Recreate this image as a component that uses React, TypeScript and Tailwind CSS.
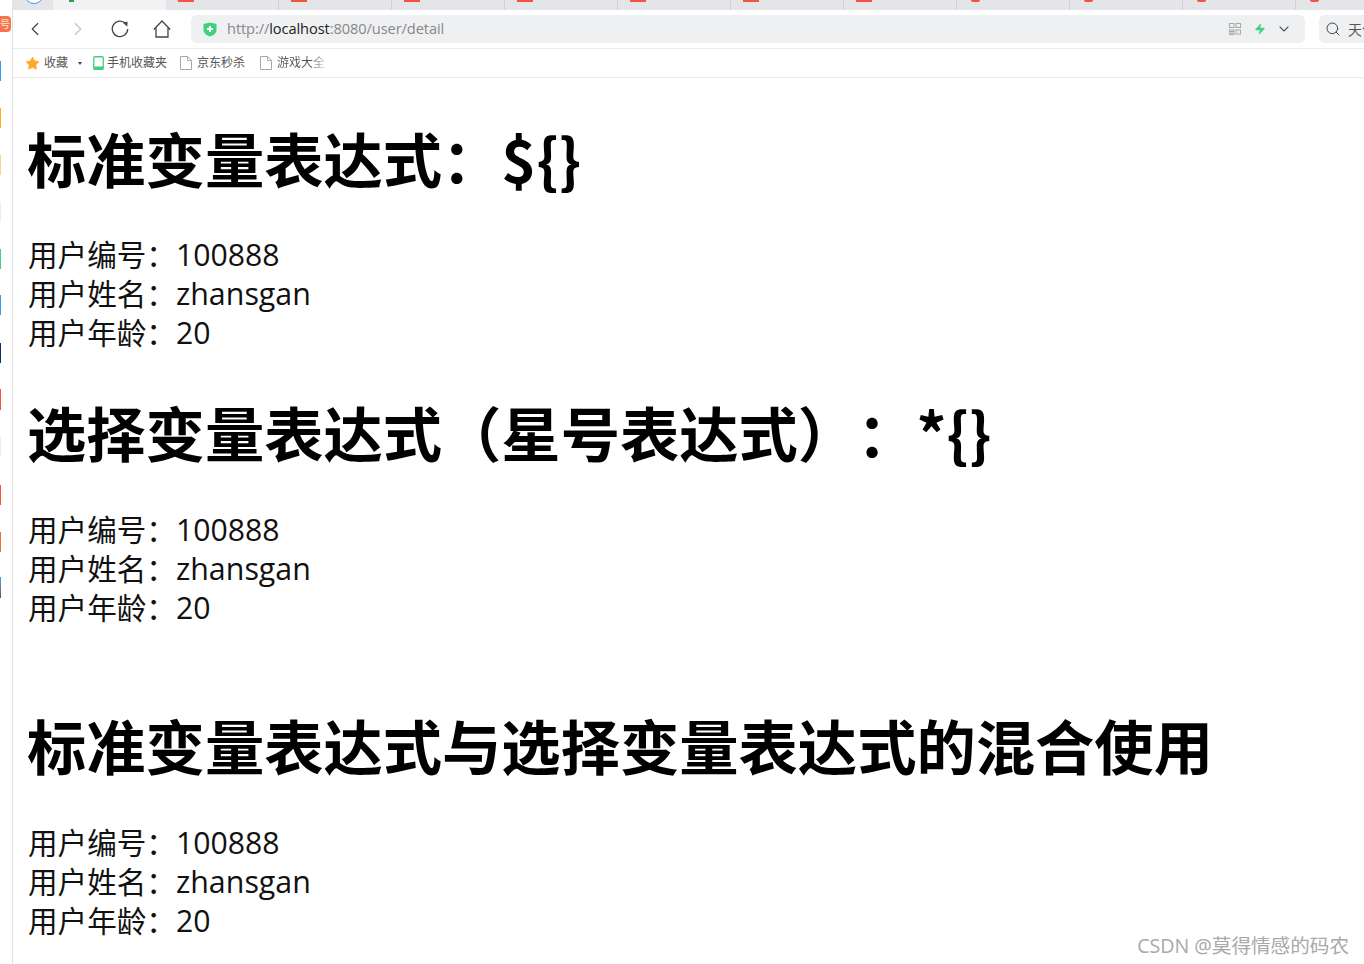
import React from "react";
import { ChevronLeft, ChevronRight, ChevronDown, Search, Zap, Star } from "lucide-react";

function Rows() {
  return (
    <div className="text-[29.6px] leading-[39px] text-[#111]">
      <div>用户编号：<span className="text-[30.2px]">100888</span></div>
      <div>用户姓名：<span className="text-[30.4px]">zhansgan</span></div>
      <div>用户年龄：<span className="text-[30.2px]">20</span></div>
    </div>
  );
}

function Tab({ round }: { round?: boolean }) {
  return (
    <div className={`w-[113px] h-full shrink-0 flex border-r border-[#cfd0d4] ${round ? "pl-[14px]" : "pl-[12px]"}`}>
      {round ? (
        <div className="w-[9px] h-[2px] rounded-b-full bg-[#f5533d]" />
      ) : (
        <div className="w-4 h-[2px] bg-[#f5533d]" />
      )}
    </div>
  );
}

function PageIcon({ className }: { className: string }) {
  return (
    <svg className={className} width="12" height="14" viewBox="0 0 12 14" fill="none" stroke="#a9a9a9" strokeWidth="1">
      <path d="M0.5 0.5 H7.5 L11.5 4.5 V13.5 H0.5 Z" />
      <path d="M7.5 0.5 V4.5 H11.5" />
    </svg>
  );
}

export default function App() {
  return (
    <div className="w-[1364px] h-[964px] overflow-hidden bg-white flex font-['Open_Sans','Noto_Sans_CJK_SC',sans-serif] [text-spacing-trim:space-all]">
      <div className="w-[12px] shrink-0 flex flex-col items-start">
        <div className="mt-[16px] w-[11px] h-[16px] bg-[#f8734f] rounded-r-sm text-[#ffe9c8] text-[10px] leading-[16px] overflow-hidden">号</div>
        <div className="mt-[29px] w-[1px] h-[20px] bg-[#3a9fe8]" />
        <div className="mt-[27px] w-[1px] h-[20px] bg-[#ffb020]" />
        <div className="mt-[27px] w-[1px] h-[20px] bg-[#ffd48a]" />
        <div className="mt-[27px] w-[1px] h-[20px] bg-[#eeeeee]" />
        <div className="mt-[27px] w-[1px] h-[20px] bg-[#3fd17f]" />
        <div className="mt-[26px] w-[1px] h-[20px] bg-[#3a9fe8]" />
        <div className="mt-[28px] w-[1px] h-[20px] bg-[#0b2f6b]" />
        <div className="mt-[26px] w-[1px] h-[21px] bg-[#f5533d]" />
        <div className="mt-[27px] w-[1px] h-[20px] bg-[#eeeeee]" />
        <div className="mt-[28px] w-[1px] h-[20px] bg-[#f5533d]" />
        <div className="mt-[27px] w-[1px] h-[20px] bg-[#e8703a]" />
        <div className="mt-[25px] w-[1px] h-[21px] bg-gradient-to-b from-[#3a9fe8] to-[#8a4a2a]" />
      </div>
      <div className="flex-1 min-w-0 border-l border-[#e3e3e3] flex flex-col relative">
        {/* tabs */}
        <div className="h-[10px] bg-[#e4e5e9] flex shrink-0 overflow-hidden">
          <div className="w-[40px] shrink-0 relative">
            <div className="absolute left-[11px] -top-[17px] w-[20px] h-[21px] rounded-full border border-[#3a9fe8] bg-white" />
          </div>
          <div className="w-[113px] shrink-0 bg-[#f1f2f4] pl-[16px]"><div className="w-[5px] h-[2px] bg-[#2e9e4f]" /></div>
          <Tab /><Tab /><Tab /><Tab /><Tab /><Tab /><Tab />
          <Tab round /><Tab round /><Tab round /><Tab round />
        </div>
        {/* toolbar */}
        <div className="h-[38px] flex items-center shrink-0 text-[#444]">
          <ChevronLeft className="ml-[11px] w-[22px] h-[24px] text-[#444]" strokeWidth={1.3} />
          <ChevronRight className="ml-[21px] w-[22px] h-[24px] text-[#c4c4c4]" strokeWidth={1.3} />
          <svg className="ml-[22px]" width="18" height="18" viewBox="0 0 18 18" fill="none">
            <path d="M14.6 3.6 A7.7 7.7 0 1 0 16.7 9" stroke="#444" strokeWidth="1.3" />
            <path d="M11.8 2.6 L16.6 1.8 L16.2 6.8 Z" fill="#444" />
          </svg>
          <svg className="ml-[24px]" width="18" height="18" viewBox="0 0 18 18" fill="none" stroke="#444" strokeWidth="1.3">
            <path d="M0.8 9.5 L9 1 L17.2 9.5" />
            <path d="M3 8 V17 H15 V8" />
          </svg>
          <div className="ml-[20px] w-[1114px] h-[28px] shrink-0 rounded-md bg-[#eff0f2] flex items-center pl-[12px] pr-[13px]">
            <svg width="14" height="15" viewBox="0 0 14 15">
              <path d="M7 0.5 L13.5 2 V8 C13.5 11.5 10 13.5 7 14.5 C4 13.5 0.5 11.5 0.5 8 V2 Z" fill="#3fd17f" />
              <path d="M7 4 V10 M4 7 H10" stroke="#fff" strokeWidth="2" />
            </svg>
            <div className="ml-[10px] -mt-[2px] text-[14.65px] leading-[20px] text-[#888] tracking-[-0.1px]">
              http://<span className="text-[#222]">localhost</span>:8080/user/detail
            </div>
            <div className="ml-auto flex items-center">
              <svg width="12" height="12" viewBox="0 0 12 12" fill="none" stroke="#a8a8a8" strokeWidth="1">
                <rect x="0.5" y="0.5" width="4.5" height="4" /><rect x="7" y="0.5" width="4.5" height="4" />
                <rect x="0.5" y="7" width="4.5" height="1.5" /><rect x="7" y="7" width="4.5" height="4" /><rect x="0.5" y="10" width="4.5" height="1.5" />
              </svg>
              <Zap className="ml-[13px] w-[12px] h-[14px] text-[#3fd17f]" fill="#3fd17f" strokeWidth={1} />
              <ChevronDown className="ml-[10px] w-[16px] h-[16px] text-[#555]" strokeWidth={1.6} />
            </div>
          </div>
          <div className="ml-[14px] flex-1 min-w-0 h-[28px] rounded-l-md bg-[#eff0f2] flex items-center pl-[6px] overflow-hidden">
            <Search className="w-[16px] h-[16px] text-[#444] shrink-0" strokeWidth={1.5} />
            <span className="ml-[7px] text-[14px] text-[#555] whitespace-nowrap">天气</span>
          </div>
        </div>
        {/* bookmarks */}
        <div className="h-[30px] border-y border-[#ebebeb] flex items-center shrink-0 text-[12px] text-[#555] pl-[12px]">
          <Star className="w-[15px] h-[15px] text-[#ffa726]" fill="#ffa726" strokeWidth={1} />
          <span className="ml-[4px]">收藏</span>
          <span className="ml-[10px] w-0 h-0 border-x-[2.5px] border-x-transparent border-t-[3px] border-t-[#444]" />
          <svg className="ml-[11px]" width="11" height="14" viewBox="0 0 11 14" fill="none">
            <rect x="0.75" y="0.75" width="9.5" height="12.5" rx="1" stroke="#3fd17f" strokeWidth="1.3" />
            <rect x="1" y="10.5" width="9" height="3" fill="#3fd17f" />
          </svg>
          <span className="ml-[3px]">手机收藏夹</span>
          <PageIcon className="ml-[13px]" />
          <span className="ml-[5px]">京东秒杀</span>
          <PageIcon className="ml-[15px]" />
          <span className="ml-[5px] bg-gradient-to-r from-[#555] from-70% to-[#ddd] bg-clip-text text-transparent">游戏大全</span>
        </div>
        {/* content */}
        <div className="flex-1 pl-[15px] text-black">
          <h1 className="mt-[37px] -ml-[1px] text-[59.3px] leading-[84px] font-bold font-['Noto_Sans_CJK_SC',sans-serif]">标准变量表达式：${"{}"}</h1>
          <div className="mt-[36px]"><Rows /></div>
          <h1 className="mt-[37px] -ml-[1px] text-[59.3px] leading-[84px] font-bold font-['Noto_Sans_CJK_SC',sans-serif]">选择变量表达式（星号表达式）：*{"{}"}</h1>
          <div className="mt-[37px]"><Rows /></div>
          <h1 className="mt-[75px] -ml-[1px] text-[59.3px] leading-[84px] font-bold font-['Noto_Sans_CJK_SC',sans-serif]">标准变量表达式与选择变量表达式的混合使用</h1>
          <div className="mt-[37px]"><Rows /></div>
        </div>
        <div className="absolute right-[15px] top-[932px] text-[19.6px] leading-[28px] text-[#a9a9a9]">CSDN @莫得情感的码农</div>
      </div>
    </div>
  );
}
